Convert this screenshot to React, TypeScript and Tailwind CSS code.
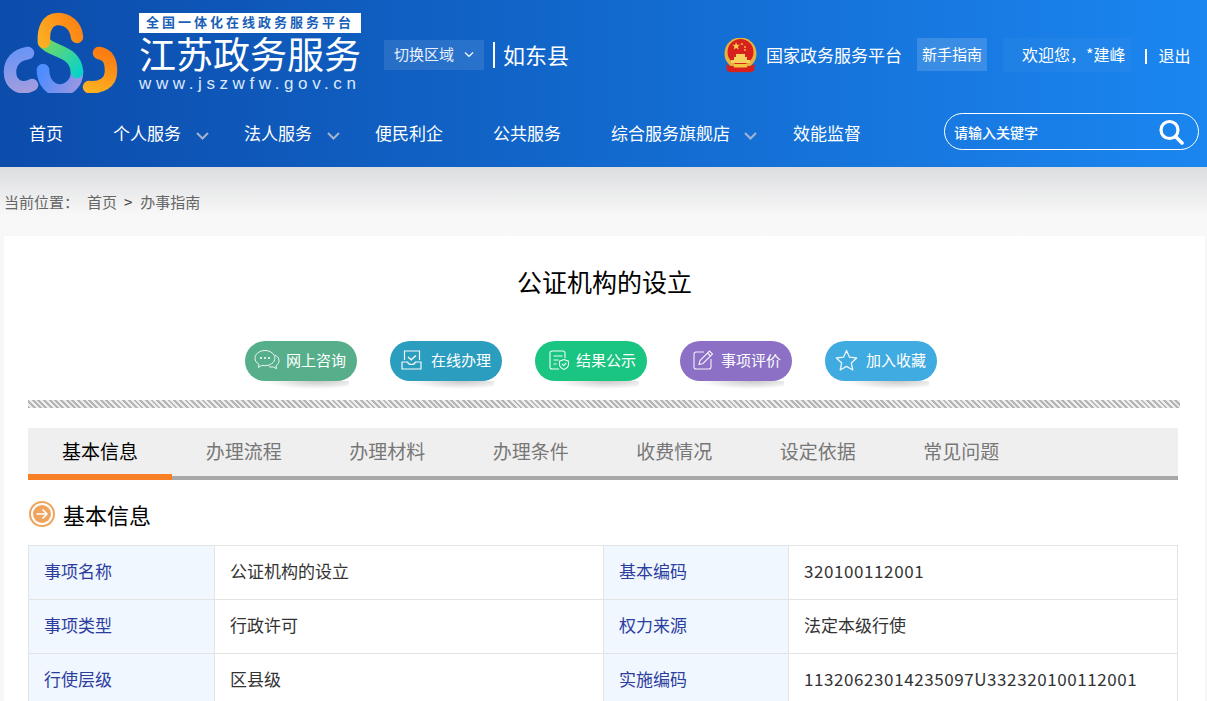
import React from "react";

const font = "font-['Noto_Sans_CJK_SC','Noto_Sans',sans-serif]";

function Logo() {
  return (
    <svg width="122" height="96" viewBox="0 0 122 96" className="shrink-0" fill="none">
      <defs>
        <linearGradient id="o1" gradientUnits="userSpaceOnUse" x1="38" y1="40" x2="80" y2="14">
          <stop offset="0" stopColor="#fdb022" />
          <stop offset="1" stopColor="#fb7d12" />
        </linearGradient>
        <linearGradient id="g1" gradientUnits="userSpaceOnUse" x1="40" y1="40" x2="78" y2="74">
          <stop offset="0" stopColor="#7ed957" />
          <stop offset="1" stopColor="#0bd2c8" />
        </linearGradient>
        <linearGradient id="b1" gradientUnits="userSpaceOnUse" x1="42" y1="70" x2="80" y2="90">
          <stop offset="0" stopColor="#4c8dff" />
          <stop offset="1" stopColor="#9f97df" />
        </linearGradient>
        <linearGradient id="b2" gradientUnits="userSpaceOnUse" x1="24" y1="52" x2="32" y2="92">
          <stop offset="0" stopColor="#6d95f5" />
          <stop offset="1" stopColor="#a59ddc" />
        </linearGradient>
        <linearGradient id="o2" gradientUnits="userSpaceOnUse" x1="100" y1="52" x2="88" y2="90">
          <stop offset="0" stopColor="#fb7d12" />
          <stop offset="1" stopColor="#fdb022" />
        </linearGradient>
        <clipPath id="cl"><rect x="0" y="0" width="122" height="93" /></clipPath>
      </defs>
      <g clipPath="url(#cl)" strokeWidth="12.5" strokeLinecap="round">
        <path d="M28 53 C16 55 10 62 10 72 C10 84 20 91 32 85" stroke="url(#b2)" />
        <path d="M99 53 C110 55 111 64 111 71 C111 83 101 88 89 87" stroke="url(#o2)" />
        <path d="M43 70 C43 88 60 97 72 85 C76 81 77 77 77 72" stroke="url(#b1)" />
        <path d="M44 42 C50 52 76 50 77 72" stroke="url(#g1)" />
        <path d="M77 37 C76 26 68 19 58 19 C47 19 43 30 44 42" stroke="url(#o1)" />
      </g>
    </svg>
  );
}

function Emblem() {
  return (
    <svg width="33" height="35" viewBox="0 0 33 35" className="shrink-0">
      <circle cx="16.5" cy="15.5" r="16" fill="#e8b33a" />
      <circle cx="16.5" cy="14" r="13" fill="#d8201c" />
      <path d="M12 4l1.200 3 3-.4-2.300 2 .9 3-2.600-1.700-2.600 1.700.9-3-2.300-2 3 .4z" fill="#f6d04d" />
      <circle cx="18" cy="6" r=".9" fill="#f6d04d" />
      <circle cx="21" cy="9" r=".9" fill="#f6d04d" />
      <circle cx="21" cy="12" r=".9" fill="#f6d04d" />
      <path d="M7 22h19v3H7zM10 19h13v3H10zM12 16h9v3h-9z" fill="#f4d25e" />
      <path d="M2 26c4 3 9 2 14.500 2S27 29 31 26l-1 7c-4 2-9 1-13.500 1S7 35 3 33z" fill="#d8201c" />
      <rect x="10" y="26" width="13" height="3.500" fill="#f4c542" />
    </svg>
  );
}

function IconChat() {
  return (
    <svg width="26" height="22" viewBox="0 0 26 22" fill="none" stroke="#fff" strokeWidth="1" opacity=".9">
      <path d="M11 1.500C5.500 1.500 1 5 1 9.200c0 2.600 1.600 4.800 4 6.200l-.6 3 3.500-2c1 .2 2 .3 3 .3 5.500 0 10-3.400 10-7.500S16.500 1.500 11 1.500z" />
      <path d="M21 6c2.600 1.200 4 3.400 4 5.700 0 2-1.200 3.800-3 5l.6 3-3.400-1.800c-1.500.3-3 .2-4.200-.3" />
      <circle cx="7" cy="9" r=".7" fill="#fff" />
      <circle cx="11" cy="9" r=".7" fill="#fff" />
      <circle cx="15" cy="9" r=".7" fill="#fff" />
    </svg>
  );
}
function IconInbox() {
  return (
    <svg width="21" height="20" viewBox="0 0 21 20" fill="none" stroke="#fff" strokeWidth="1.200" opacity=".95">
      <path d="M3.500 10V1h15v9" />
      <path d="M1 12h5.500c.5 1.500 2 2.500 4 2.500s3.500-1 4-2.500H20v7H1z" />
      <path d="M7 7l3.200 2.800L15 5.500" strokeWidth="1.500" />
    </svg>
  );
}
function IconDoc() {
  return (
    <svg width="21" height="20" viewBox="0 0 21 20" fill="none" stroke="#fff" strokeWidth="1.100" opacity=".95">
      <path d="M10 19H3a2 2 0 0 1-2-2V3a2 2 0 0 1 2-2h11a2 2 0 0 1 2 2v5" />
      <path d="M4.500 6h9M4.500 10h5M4.500 14h3" />
      <path d="M15 9.500l4.500 1.700v3.300c0 2.500-2.200 4-4.500 5-2.300-1-4.500-2.500-4.500-5v-3.300z" />
      <path d="M13 14l1.600 1.600 2.600-2.800" />
    </svg>
  );
}
function IconEdit() {
  return (
    <svg width="21" height="20" viewBox="0 0 21 20" fill="none" stroke="#fff" strokeWidth="1.100" opacity=".9">
      <path d="M11 2H3a2 2 0 0 0-2 2v13a2 2 0 0 0 2 2h13a2 2 0 0 0 2-2V9" />
      <path d="M6 14.500l1-4L16.500 1l3 3L10 13.500z" />
      <path d="M14.500 3l3 3" />
    </svg>
  );
}
function IconStar() {
  return (
    <svg width="23" height="22" viewBox="0 0 23 22" fill="none" stroke="#fff" strokeWidth="1.300" opacity=".9" strokeLinejoin="round">
      <path d="M11.500 1.500l3 6.700 7.200.8-5.400 4.900 1.500 7.100-6.300-3.600-6.300 3.600 1.500-7.100L1.300 9l7.200-.8z" />
    </svg>
  );
}

const Chevron = () => (
  <svg width="13" height="8" viewBox="0 0 13 8" fill="none" stroke="#a3b4cc" strokeWidth="2" className="shrink-0">
    <path d="M1 1l5.500 5.500L12 1" />
  </svg>
);

const pills = [
  { t: "网上咨询", c: "bg-[#56af8a]", i: <IconChat />, gap: "gap-[6px]", pl: "pl-[9px]" },
  { t: "在线办理", c: "bg-[#2b9dbf]", i: <IconInbox />, gap: "gap-[9px]", pl: "pl-[11px]" },
  { t: "结果公示", c: "bg-[#1ac481]", i: <IconDoc />, gap: "gap-[6px]", pl: "pl-[14px]" },
  { t: "事项评价", c: "bg-[#8b70c5]", i: <IconEdit />, gap: "gap-[7px]", pl: "pl-[13px]" },
  { t: "加入收藏", c: "bg-[#3fabe0]", i: <IconStar />, gap: "gap-[8px]", pl: "pl-[10px]" },
];

const tabs = ["基本信息", "办理流程", "办理材料", "办理条件", "收费情况", "设定依据", "常见问题"];

const rows = [
  ["事项名称", "公证机构的设立", "基本编码", "320100112001"],
  ["事项类型", "行政许可", "权力来源", "法定本级行使"],
  ["行使层级", "区县级", "实施编码", "11320623014235097U332320100112001"],
];

export default function App() {
  return (
    <div className={`${font} h-[701px] w-[1207px] overflow-hidden bg-[#f7f7f7]`}>
      <header className="h-[167px] bg-gradient-to-r from-[#0c4cab] to-[#1b86f0] text-white">
        <div className="flex h-[107px] items-start">
          <Logo />
          <div className="ml-[17px] mt-[13px] flex w-[222px] flex-col">
            <div className="h-[20px] bg-white text-center font-['Liberation_Sans','Noto_Sans_CJK_SC',sans-serif] text-[13px] font-bold leading-[20px] tracking-[3px] text-[#1a5fb8] whitespace-nowrap">全国一体化在线政务服务平台</div>
            <div className="mt-[1px] h-[38px] pt-[4px] font-['Liberation_Sans','Noto_Sans_CJK_SC',sans-serif] text-[37px] font-normal leading-[38px] whitespace-nowrap">江苏政务服务</div>
            <div className="mt-[2px] font-['Liberation_Sans',sans-serif] text-[17px] leading-[20px] tracking-[4.600px] text-[#dbe9fb] whitespace-nowrap">www.jszwfw.gov.cn</div>
          </div>
          <div className="ml-[23px] mt-[40px] flex h-[30px] w-[100px] items-center bg-white/10 pb-[1px] pl-[10px] text-[15px] text-[#e8f1fc]">
            <span>切换区域</span>
            <svg width="10" height="6" viewBox="0 0 10 6" fill="none" stroke="#fff" strokeWidth="1.200" className="ml-[10px]"><path d="M1 .5l4 4 4-4" /></svg>
          </div>
          <div className="ml-[9px] mt-[42px] h-[26px] w-[2px] bg-white" />
          <div className="ml-[8px] mt-[38px] text-[22px] leading-[32px]">如东县</div>
          <div className="ml-[155px] mt-[38px]"><Emblem /></div>
          <div className="ml-[9px] mt-[42px] text-[17px] leading-[26px] whitespace-nowrap">国家政务服务平台</div>
          <div className="ml-[15px] mt-[38px] flex h-[33px] w-[70px] items-center justify-center bg-white/15 text-[15px] whitespace-nowrap">新手指南</div>
          <div className="ml-[16px] mt-[38px] flex h-[34px] items-center bg-white/[.03] pl-[19px] pr-[5px] pb-[2px] text-[16px] whitespace-nowrap">欢迎您，*建峰</div>
          <div className="ml-[14px] mt-[49px] h-[15px] w-[2px] bg-white" />
          <div className="ml-[12px] mt-[42px] text-[16px] leading-[26px] whitespace-nowrap">退出</div>
        </div>
        <nav className="flex h-[60px] items-start text-[17px] leading-[52px]">
          <span className="ml-[29px]">首页</span>
          <span className="ml-[50px]">个人服务</span>
          <span className="ml-[15px] mt-[25px]"><Chevron /></span>
          <span className="ml-[35px]">法人服务</span>
          <span className="ml-[15px] mt-[25px]"><Chevron /></span>
          <span className="ml-[35px]">便民利企</span>
          <span className="ml-[50px]">公共服务</span>
          <span className="ml-[50px]">综合服务旗舰店</span>
          <span className="ml-[14px] mt-[25px]"><Chevron /></span>
          <span className="ml-[36px]">效能监督</span>
          <div className="ml-[83px] mt-[6px] flex h-[37px] w-[255px] items-center rounded-full border border-white pl-[9px] pr-[14px] text-[14px] font-medium leading-none">
            <span className="flex-1">请输入关键字</span>
            <svg width="26" height="26" viewBox="0 0 26 26" fill="none" stroke="#fff">
              <circle cx="11.500" cy="11" r="8.500" strokeWidth="3.200" />
              <path d="M18 18l6 6" strokeWidth="3.600" strokeLinecap="round" />
            </svg>
          </div>
        </nav>
      </header>

      <div className="flex h-[69px] items-center bg-gradient-to-b from-[#dcdde0] to-[#f8f8f8] to-70% pt-[1px] text-[15px] text-[#666]">
        <span className="ml-[4px]">当前位置：</span>
        <span className="ml-[8px]">首页</span>
        <span className="ml-[7px] text-[#444]">&gt;</span>
        <span className="ml-[8px]">办事指南</span>
      </div>

      <main className="ml-[4px] h-[600px] w-[1201px] bg-white pl-[24px]">
        <h1 className="-ml-[24px] pt-[27px] text-center text-[25px] font-normal leading-[36px] text-black">公证机构的设立</h1>

        <div className="ml-[217px] mt-[42px] flex gap-[33px]">
          {pills.map((p) => (
            <div key={p.t} className="relative">
              <div className="absolute left-[20px] top-[40px] h-[8px] w-[84px] rounded-b-[50%] bg-[radial-gradient(ellipse_at_62%_0%,#c8c8c8_0%,#ffffff00_72%)]" />
              <div className={`relative flex h-[40px] w-[112px] items-center rounded-full pb-[2px] text-[15px] text-white ${p.c} ${p.gap} ${p.pl}`}>
                {p.i}
                <span className="whitespace-nowrap">{p.t}</span>
              </div>
            </div>
          ))}
        </div>

        <div className="mt-[19px] h-[8px] w-[1152px] bg-[repeating-linear-gradient(45deg,#b5b5b5_0px,#b5b5b5_2px,#eeeeee_2px,#eeeeee_4px)]" />

        <div className="mt-[20px] flex h-[52px] w-[1150px] border-b-[4px] border-[#a8a8a8] bg-[#efefef]">
          {tabs.map((t, i) => (
            <div
              key={t}
              className={
                i === 0
                  ? "-mb-[4px] h-[52px] w-[144px] border-b-[6px] border-[#f77f26] pt-[8px] text-center text-[19px] leading-[29px] text-black"
                  : "w-[143.500px] pt-[8px] text-center text-[19px] leading-[29px] text-[#777]"
              }
            >
              {t}
            </div>
          ))}
        </div>

        <div className="mt-[18px] flex h-[32px] items-center">
          <svg width="26" height="26" viewBox="0 0 26 26" fill="none" className="ml-[1px]">
            <circle cx="13" cy="13" r="12" stroke="#eea45c" strokeWidth="2" />
            <circle cx="13" cy="13" r="9" fill="#eea45c" />
            <path d="M7.500 13h10M13.500 8.500L18 13l-4.500 4.500" stroke="#fff" strokeWidth="1.600" />
          </svg>
          <h2 className="ml-[8px] text-[22px] font-normal leading-[32px] text-black">基本信息</h2>
        </div>

        <table className="mt-[15px] w-[1149px] table-fixed border-collapse text-[17px] text-[#333]">
          <colgroup>
            <col className="w-[186px]" />
            <col className="w-[389px]" />
            <col className="w-[185px]" />
            <col className="w-[389px]" />
          </colgroup>
          <tbody>
            {rows.map((r) => (
              <tr key={r[0]} className="h-[54px]">
                <td className="border border-[#e3e3e3] bg-[#f0f7ff] pb-[4px] pl-[15px] text-[#2d3d9e]">{r[0]}</td>
                <td className="border border-[#e3e3e3] pb-[4px] pl-[15px]">{r[1]}</td>
                <td className="border border-[#e3e3e3] bg-[#f0f7ff] pb-[4px] pl-[15px] text-[#2d3d9e]">{r[2]}</td>
                <td className={`border border-[#e3e3e3] pb-[4px] pl-[15px] whitespace-nowrap ${/^\d/.test(r[3]) ? "tracking-[.58px]" : ""}`}>{r[3]}</td>
              </tr>
            ))}
          </tbody>
        </table>
      </main>
    </div>
  );
}
